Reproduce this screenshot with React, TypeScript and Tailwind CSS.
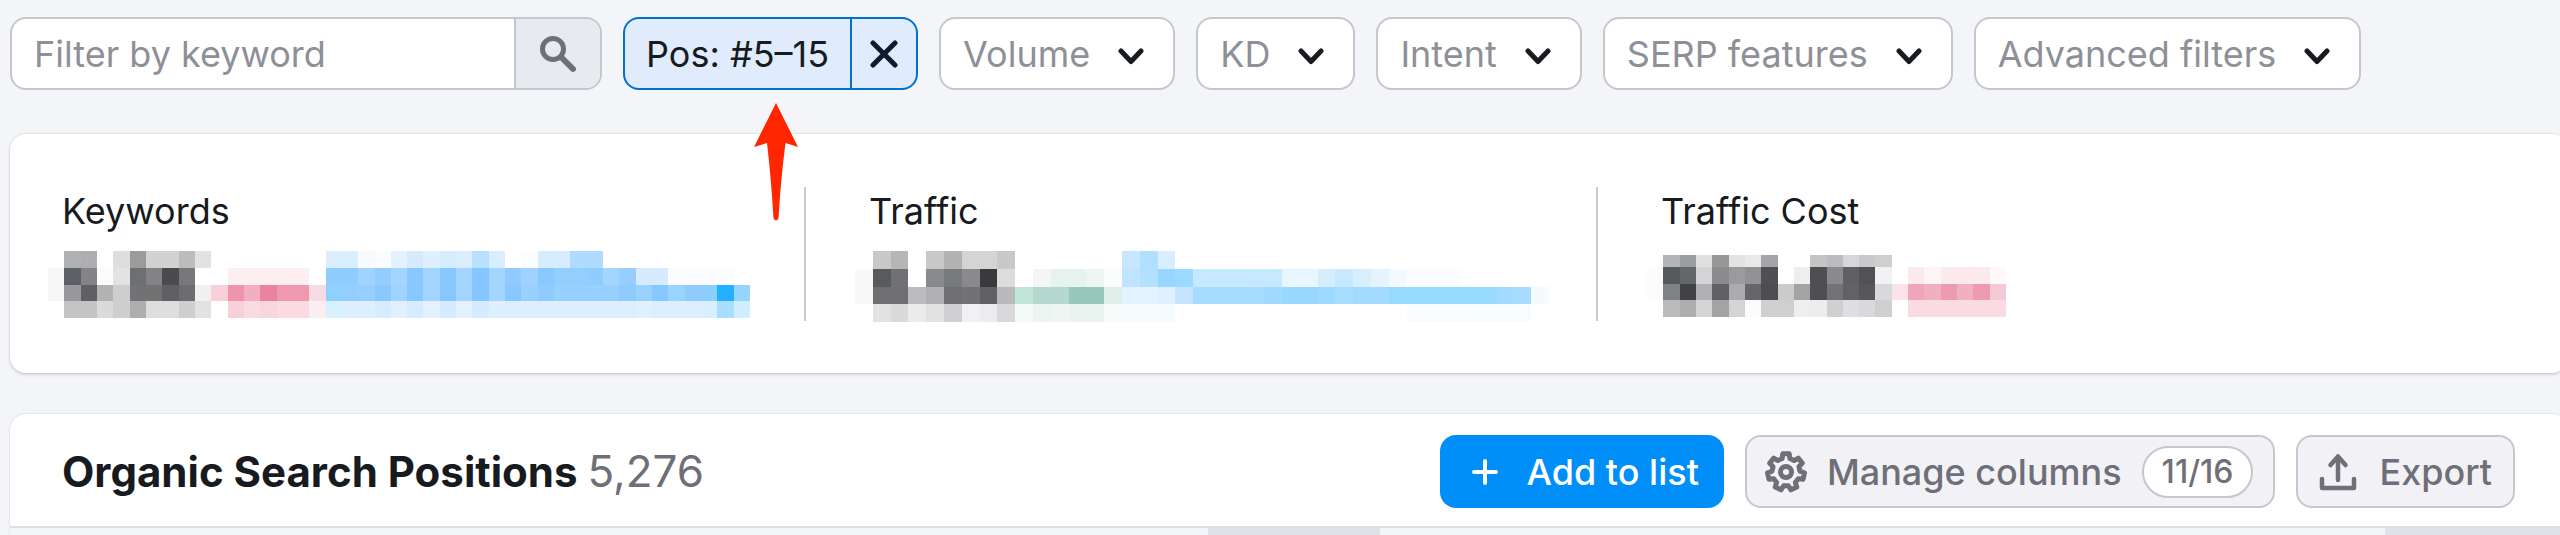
import type { ReactNode } from "react";

const filters = ["Volume", "KD", "Intent", "SERP features", "Advanced filters"];

// Censored values: one string per row, one colour per cell, "-" is an empty cell
const keywordsMosaic = [
  "- b0b1b3 aeaeb0 - dedede 9b9b9b d2d2d2 d2d2d2 bcbcbc e2e2e2 - - - - - - - dceefe d9eeff f6fbff f8fcff e4f1ff d6eafc def0ff d6ecff d8edff b8e0ff d8edff - fafcff d6ecff d6ecff aedbff aedbff",
  "f6f6f6 5f6065 838388 fcfcfc e3e3e3 6e6f73 828287 4a4a4f 76787b - - fdeef1 fdeef1 fdeef1 fdeef1 fdeef1 - 8fcdff 8fcdff a0d3ff 93cdff a3d5ff 86c8ff a3d5ff 86c8ff a3d5ff 84c6ff a3d5ff 90caff a1d2ff 8ac9ff 92cfff 92cfff 8fcdff a3d5ff 98ceff d6ebff d6ebff fafcff fafcff fafcff fafcff",
  "f6f6f6 98999c 5f6064 b3b3b3 cecece 717274 717274 5f6064 6c6d70 f0f0f0 f9d0da ee95ad f1afc1 e9849c ef99b0 ef99b0 f5dbe3 8fd0ff 93ceff 98cfff 8ac9ff a0d3ff 86c8ff a3d5ff 86c8ff a3d5ff 84c6ff a3d5ff 88c7ff 98d0ff 8fcbff 98d0ff 98d0ff 98d0ff 98d0ff 8fcbff 9ad2ff 86c8ff 98d4ff 90ccff 8bcfff 22b0ff 93d5ff",
  "- c4c4c4 c4c4c4 dadada cecece aeaeb0 dedede dedede cecece e2e2e2 - f8d0d8 fadbe1 f9d5dc fadbe1 fadbe1 fbeef2 d9f0ff ddeeff ddeeff d8ecff e0f0ff d8ecff e2f1ff d6ebff e2f1ff d6ebff ddeeff ddeeff ddeeff ddeeff ddeeff ddeeff ddeeff ddeeff ddeeff e0f0ff ddeeff ddeeff ddeeff d9eeff a8deff d0eeff",
];

const trafficMosaic = [
  "- c8c8c8 b6b6b6 - c8c8c8 b2b2b2 d4d4d4 d4d4d4 c8c8c8 - - - - - - c6e7ff b0e0ff d8eeff",
  "f8f8f8 575b5e 717175 - 88898c 787b7d 8a8a8d 3a3a3e dcdcdc - f2f7f5 e5f2ed e5f2ed eef6f3 fbfdfd bfe4ff b4e0ff 96d7ff 9cdaff c6e9ff c6e9ff c6e9ff c6e9ff c6e9ff eaf6ff eaf6ff d6edfd c6e9ff d9eefd e4f3fe f2f9ff fafdff fafdff fafdff",
  "f8f8f8 6f6f72 6f6f72 bcbbbd b0afb2 6f6f73 727276 616165 b9b8ba c0e6d9 b5d9ce b5d9ce 98c8ba 98c8ba e0eeea e4f3ff e4f3ff e0f0ff c6e5ff a5dcff a5dcff a5dcff a8dcff a2daff 98d8ff 98d8ff 9ed9ff a8ddff a2dbff a2dbff 98d9ff 98d9ff 98d9ff 98d9ff 98d9ff 98d9ff a2dbff a6dcff f5faff",
  "- e2e2e2 dadada ebebeb e2e2e2 d0d0d2 f1f1f3 ededef d9d9db f5fbf9 eaf4f0 eef6f3 e9f3f0 e9f3f0 f7fbfa f6fbfd f6fbfd f6fbfd - - - - - - - - - - - - - fafdff fafdff fafdff fafdff f6fcff f6fcff f8fcff",
];

const costMosaic = [
  "- b3b4b5 9c9d9e e0e0e0 969797 e3e3e3 e9e9e9 a5a5a7 - - c4c5c5 bbbcbe d7d7d9 c9c9cb cecfcf",
  "fbfbfb 575a5d 65666a d4d4d6 8b8b8d 9b9b9e 929294 4f4f54 - eeeeee 4f4f53 8a8a8e 5f6064 515156 f2f2f4 - fbe9ed fef5f7 fbe9ed fbe9ed fbe9ed fef8fa",
  "fbfbfb 7f8284 404246 b0b0b2 616164 acacaf 65656a 4d4d52 cbcbcb a2a4a4 4f4f53 727277 616166 57575b d8d9db fce3e9 f0a5b8 f1b0c0 ee9ab0 f1b0c0 ee9ab0 f5c9d4",
  "- babbbd aeaeb0 d4d4d6 a3a3a5 d4d4d6 fcfcfa cfcfcf cfcfcf eeeeee ededed d0d0d2 dfdfe3 d9d9db cfcfcf - f9dbe2 f9dbe2 f9dbe2 f9dbe2 f9dbe2 f9dbe2",
];

// Outline of a seven-toothed gear centred on 21,21
const gearPoints = [...Array(7)]
  .flatMap((_, i) =>
    [[-16, 14], [-10, 18.5], [10, 18.5], [16, 14]].map(([offset, radius]) => {
      const angle = (((i * 360) / 7 - 90 + offset) * Math.PI) / 180;
      return `${(21 + radius * Math.cos(angle)).toFixed(2)},${(21 + radius * Math.sin(angle)).toFixed(2)}`;
    })
  )
  .join(" ");

function Mosaic({ rows, viewBox, className }: { rows: string[]; viewBox: string; className: string }) {
  return (
    <svg viewBox={viewBox} preserveAspectRatio="none" shapeRendering="crispEdges" className={className} aria-hidden="true">
      {rows.map((row, y) =>
        row.split(" ").map((color, x) =>
          color === "-" ? null : <rect key={`${x}-${y}`} x={x} y={y} width="1" height="1" fill={`#${color}`} />
        )
      )}
    </svg>
  );
}

function Chevron() {
  return (
    <svg viewBox="0 0 28 18" className="w-7 h-[18px] mt-1" fill="none" stroke="#171a1e" strokeWidth="5" strokeLinecap="round" strokeLinejoin="round" aria-hidden="true">
      <path d="M4 4l10 10.500L24 4" />
    </svg>
  );
}

function Arrow() {
  return (
    <svg viewBox="0 0 44 120" className="absolute left-[129px] top-[83px] w-11 h-[120px]" aria-hidden="true">
      <path d="M22 1L44 45L31.500 41Q27 75 24.500 116Q22 121 19.500 116Q17 75 13 41L0 45Z" fill="#ff2600" />
    </svg>
  );
}

function Metric({ label, className, children }: { label: string; className: string; children: ReactNode }) {
  return (
    <div className={className}>
      <h3 className="text-[36px] leading-[48px]">{label}</h3>
      {children}
    </div>
  );
}

export default function App() {
  return (
    <div className="bg-[#f4f5f9] font-['Inter',sans-serif] text-[#171a1e] overflow-hidden">
      <div className="flex items-center gap-[21px] pl-2.5 pt-[17px]">
        <form className="flex w-[592px] h-[73px] rounded-2xl border-2 border-[#c6c7cc] bg-white overflow-hidden">
          <input
            type="text"
            aria-label="Filter by keyword"
            placeholder="Filter by keyword"
            className="flex-1 min-w-0 pl-[22px] text-[36px] outline-none placeholder:text-[#8e9097]"
          />
          <button type="button" aria-label="Search" className="flex items-center justify-center w-[86px] border-l-2 border-[#c6c7cc] bg-[#e9eaef]">
            <svg viewBox="0 0 40 40" className="w-10 h-10" fill="none" stroke="#6e6f77" strokeLinecap="round" aria-hidden="true">
              <circle cx="15" cy="15" r="10.500" strokeWidth="5" />
              <path d="M23.500 23.500L35 35" strokeWidth="6" />
            </svg>
          </button>
        </form>

        <div className="relative flex h-[73px] rounded-2xl border-2 border-[#0071cd] bg-[#e0ebfc]">
          <button type="button" className="px-[21px] text-[36px]">Pos: #5–15</button>
          <button type="button" aria-label="Clear position filter" className="flex items-center justify-center w-[66px] border-l-2 border-[#0071cd]">
            <svg viewBox="0 0 28 28" className="w-7 h-7" fill="none" stroke="#0f1b2d" strokeWidth="5" strokeLinecap="round" aria-hidden="true">
              <path d="M3 3l22 22M25 3L3 25" />
            </svg>
          </button>
          <Arrow />
        </div>

        {filters.map((name) => (
          <button
            key={name}
            type="button"
            aria-haspopup="true"
            className="flex items-center gap-[27px] h-[73px] pl-[22px] pr-7 rounded-2xl border-2 border-[#c6c7cc] bg-white text-[36px] text-[#8e9097] whitespace-nowrap"
          >
            {name}
            <Chevron />
          </button>
        ))}
      </div>

      {/* Summary */}
      <section className="mt-11 ml-2.5 -mr-2 rounded-2xl bg-white shadow-[0_0_2px_rgba(25,27,35,0.2),0_2px_3px_rgba(25,27,35,0.12)]">
        <div className="grid grid-cols-[796px_792px_1fr] pt-[53px] pb-[52px]">
          <Metric label="Keywords" className="h-[134px] pl-[52px] border-r-2 border-[#cbccd0]">
            <Mosaic rows={keywordsMosaic} viewBox="0 0 43 4" className="w-[702px] h-[67px] mt-4 -ml-3.5" />
          </Metric>
          <Metric label="Traffic" className="h-[134px] pl-[63px] border-r-2 border-[#cbccd0]">
            <Mosaic rows={trafficMosaic} viewBox="0 0 39 4" className="w-[694px] h-[71px] mt-4 -ml-3.5" />
          </Metric>
          <Metric label="Traffic Cost" className="h-[134px] pl-[63px]">
            <Mosaic rows={costMosaic} viewBox="0 0.25 22 3.75" className="w-[359px] h-[62px] mt-5 -ml-3.5" />
          </Metric>
        </div>
      </section>

      {/* Positions */}
      <section className="mt-[41px] ml-2.5 -mr-2 rounded-t-2xl bg-white shadow-[0_0_2px_rgba(25,27,35,0.2)]">
        <div className="flex items-center gap-[21px] pl-[52px] pr-[53px] pt-[21px] pb-[18px]">
          <h2 className="flex-1 text-[42px] leading-[48px] font-bold whitespace-nowrap">
            Organic Search Positions <span className="text-[44px] font-normal text-[#6e6f77]">5,276</span>
          </h2>
          <button type="button" className="flex items-center gap-7 h-[73px] pl-[31px] pr-[25px] rounded-2xl bg-[#008ff8] text-white text-[36px] font-medium">
            <svg viewBox="0 0 28 28" className="w-7 h-7" fill="none" stroke="currentColor" strokeWidth="4" strokeLinecap="round" aria-hidden="true">
              <path d="M14 3v22M3 14h22" />
            </svg>
            Add to list
          </button>
          <button type="button" className="flex items-center h-[73px] pl-[18px] pr-5 rounded-2xl border-2 border-[#c6c7cc] bg-[#f2f2f6] text-[#6e6f77] text-[36px] font-medium">
            <svg viewBox="0 0 42 42" className="w-[42px] h-[42px] mr-5" fill="none" stroke="currentColor" strokeWidth="5" strokeLinejoin="round" aria-hidden="true">
              <polygon points={gearPoints} />
              <circle cx="21" cy="21" r="5.500" />
            </svg>
            Manage columns
            <span className="ml-5 px-[18px] rounded-full border-2 border-[#c6c7cc] bg-white text-[32px] leading-[48px]">11/16</span>
          </button>
          <button type="button" className="flex items-center gap-[22px] h-[73px] px-[21px] rounded-2xl border-2 border-[#c6c7cc] bg-[#f2f2f6] text-[#6e6f77] text-[36px] font-medium">
            <svg viewBox="0 0 38 38" className="w-[38px] h-[38px]" fill="none" stroke="currentColor" strokeWidth="4.500" strokeLinecap="round" strokeLinejoin="round" aria-hidden="true">
              <path d="M3 26v9h32v-9M19 27V5M11.500 12L19 3.500 26.500 12" />
            </svg>
            Export
          </button>
        </div>
        <div className="flex h-2.5 border-t-2 border-[#dfe0e5] bg-[#f3f5f9]">
          <div className="w-[1198px]" />
          <div className="w-[172px] bg-[#e0e1e9]" />
          <div className="w-[1005px]" />
          <div className="flex-1 bg-[#e0e1e9]" />
        </div>
      </section>
    </div>
  );
}
